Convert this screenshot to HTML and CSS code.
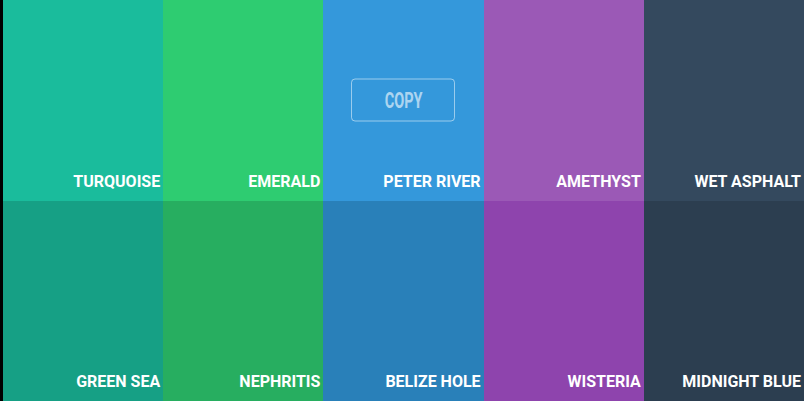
FILE: index.html
```html
<!DOCTYPE html>
<html>
<head>
<meta charset="utf-8">
<link rel="stylesheet" href="styles.css">
</head>
<body>
<div class="palette">
  <div class="swatch turquoise"><span class="name">TURQUOISE</span></div>
  <div class="swatch emerald"><span class="name">EMERALD</span></div>
  <div class="swatch peter-river"><button class="copy"><span class="copy-label">COPY</span></button><span class="name">PETER RIVER</span></div>
  <div class="swatch amethyst"><span class="name">AMETHYST</span></div>
  <div class="swatch wet-asphalt"><span class="name">WET ASPHALT</span></div>
  <div class="swatch green-sea"><span class="name">GREEN SEA</span></div>
  <div class="swatch nephritis"><span class="name">NEPHRITIS</span></div>
  <div class="swatch belize-hole"><span class="name">BELIZE HOLE</span></div>
  <div class="swatch wisteria"><span class="name">WISTERIA</span></div>
  <div class="swatch midnight-blue"><span class="name">MIDNIGHT BLUE</span></div>
</div>
</body>
</html>
```
FILE: styles.css
```css
html, body {
  margin: 0;
  height: 100%;
  background: #000;
  overflow: hidden;
}
.palette {
  height: 100%;
  padding-left: 3px;
  display: grid;
  grid-template-columns: repeat(5, 1fr);
  grid-template-rows: 1fr 1fr;
}
.swatch {
  position: relative;
  display: flex;
  align-items: flex-end;
  justify-content: flex-end;
  padding: 0 3px 11px 0;
}
.name {
  font-family: Roboto, "Liberation Sans", sans-serif;
  font-weight: 700;
  font-size: 16px;
  line-height: 16px;
  color: #fff;
}
.turquoise { background: #1abc9c; }
.emerald { background: #2ecc71; }
.peter-river { background: #3498db; }
.amethyst { background: #9b59b6; }
.wet-asphalt { background: #34495e; }
.green-sea { background: #16a085; }
.nephritis { background: #27ae60; }
.belize-hole { background: #2980b9; }
.wisteria { background: #8e44ad; }
.midnight-blue { background: #2c3e50; }
.copy {
  position: absolute;
  left: 50%;
  top: 50%;
  transform: translate(-50%, -50%);
  width: 104px;
  height: 43px;
  background: transparent;
  border: 1px solid rgba(255,255,255,0.5);
  border-radius: 4px;
  color: rgba(255,255,255,0.6);
  padding: 0;
  display: flex;
  align-items: center;
  justify-content: center;
}
.copy-label {
  display: inline-block;
  font-family: Roboto, "Liberation Sans", sans-serif;
  font-weight: 700;
  font-size: 22px;
  line-height: 22px;
  transform: scaleX(0.66);
}
```
